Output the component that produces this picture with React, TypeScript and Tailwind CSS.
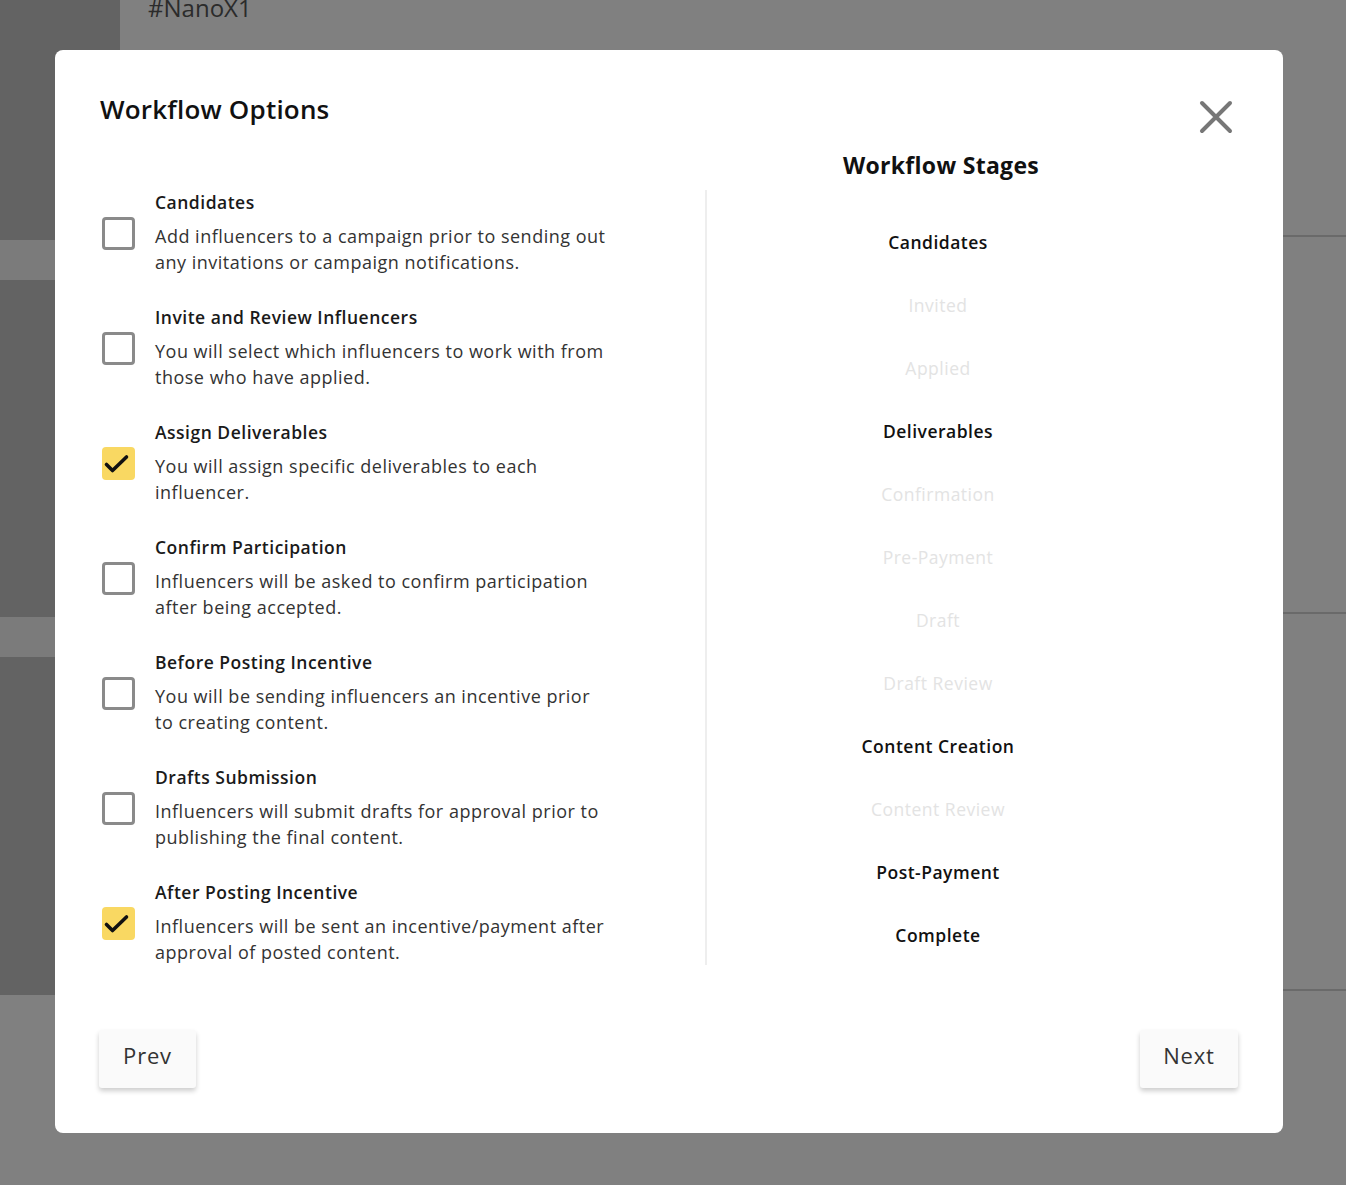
import React from 'react';

const options = [
  {
    title: 'Candidates',
    desc: ['Add influencers to a campaign prior to sending out', 'any invitations or campaign notifications.'],
    checked: false,
  },
  {
    title: 'Invite and Review Influencers',
    desc: ['You will select which influencers to work with from', 'those who have applied.'],
    checked: false,
  },
  {
    title: 'Assign Deliverables',
    desc: ['You will assign specific deliverables to each', 'influencer.'],
    checked: true,
  },
  {
    title: 'Confirm Participation',
    desc: ['Influencers will be asked to confirm participation', 'after being accepted.'],
    checked: false,
  },
  {
    title: 'Before Posting Incentive',
    desc: ['You will be sending influencers an incentive prior', 'to creating content.'],
    checked: false,
  },
  {
    title: 'Drafts Submission',
    desc: ['Influencers will submit drafts for approval prior to', 'publishing the final content.'],
    checked: false,
  },
  {
    title: 'After Posting Incentive',
    desc: ['Influencers will be sent an incentive/payment after', 'approval of posted content.'],
    checked: true,
  },
];

const stages = [
  { name: 'Candidates', active: true },
  { name: 'Invited', active: false },
  { name: 'Applied', active: false },
  { name: 'Deliverables', active: true },
  { name: 'Confirmation', active: false },
  { name: 'Pre-Payment', active: false },
  { name: 'Draft', active: false },
  { name: 'Draft Review', active: false },
  { name: 'Content Creation', active: true },
  { name: 'Content Review', active: false },
  { name: 'Post-Payment', active: true },
  { name: 'Complete', active: true },
];

function Checkbox({ checked }: { checked: boolean }) {
  if (checked) {
    return (
      <div className="h-[33px] w-[33px] rounded-[4px] bg-[#f9d862]">
        <svg width="33" height="33" viewBox="0 0 33 33" fill="none">
          <path d="M4.5 17.5l6 6L24.5 10" stroke="#111" strokeWidth="3.6" strokeLinecap="round" strokeLinejoin="round" />
        </svg>
      </div>
    );
  }
  return <div className="h-[33px] w-[33px] rounded-[4px] border-[3px] border-[#8a8a8a] bg-white" />;
}

function Background() {
  return (
    <div className="flex h-full w-full">
      <div className="flex w-[120px] flex-col">
        <div className="h-[240px] bg-[#636363]" />
        <div className="h-[40px] bg-[#7b7b7b]" />
        <div className="h-[337px] bg-[#636363]" />
        <div className="h-[40px] bg-[#7b7b7b]" />
        <div className="h-[338px] bg-[#636363]" />
        <div className="flex-1 bg-[#808080]" />
      </div>
      <div className="flex flex-1 flex-col bg-[#808080]">
        <div className="h-[235px] pl-[28px]">
          <div className="-mt-[7px] text-[24px] leading-[30px] text-[#2b2b2b]">#NanoX1</div>
        </div>
        <div className="h-[2px] bg-[#6a6a6a]" />
        <div className="h-[375px]" />
        <div className="h-[2px] bg-[#6a6a6a]" />
        <div className="h-[375px]" />
        <div className="h-[2px] bg-[#6a6a6a]" />
        <div className="flex-1" />
      </div>
    </div>
  );
}

export default function App() {
  return (
    <div
      className="relative h-[1185px] w-full overflow-hidden bg-[#808080]"
      style={{ fontFamily: '"Open Sans", "Noto Sans", sans-serif' }}
    >
      <Background />

      <div className="absolute left-[55px] top-[50px] flex h-[1083px] w-[1228px] flex-col rounded-[8px] bg-white px-[45px] pb-[45px] pt-[43px]">
        <h2 className="text-[26px] font-semibold leading-[32px] tracking-[0.2px] text-[#111]">Workflow Options</h2>

        <button className="absolute right-[50px] top-[50px] flex h-[34px] w-[34px] items-center justify-center">
          <svg width="34" height="34" viewBox="0 0 34 34" fill="none">
            <path d="M3 3l28 28M31 3L3 31" stroke="#777" strokeWidth="4" strokeLinecap="round" />
          </svg>
        </button>

        <div className="mt-[20px] flex flex-1">
          <div className="flex w-[605px] flex-col gap-[30px] pt-[45px]">
            {options.map((o) => (
              <div key={o.title} className="flex items-start">
                <div className="ml-[2px] mt-[27px] w-[53px] shrink-0">
                  <Checkbox checked={o.checked} />
                </div>
                <div>
                  <div className="text-[17.5px] font-semibold leading-[24px] tracking-[0.5px] text-[#1a1a1a]">{o.title}</div>
                  <div className="mt-[9px] text-[18px] leading-[26px] tracking-[0.5px] text-[#333]">
                    {o.desc.map((l) => (
                      <div key={l} className="whitespace-nowrap">{l}</div>
                    ))}
                  </div>
                </div>
              </div>
            ))}
          </div>

          <div className="mt-[45px] h-[775px] w-[2px] bg-[#eeeeee]" />

          <div className="flex w-[462px] flex-col items-center">
            <div className="ml-[6px] text-[23px] font-bold leading-[40px] tracking-[0.3px] text-[#111]">Workflow Stages</div>
            <div className="mt-[45px] flex flex-col items-center">
              {stages.map((s) => (
                <div
                  key={s.name}
                  className={
                    s.active
                      ? 'h-[63px] text-[17.5px] font-semibold leading-[24px] tracking-[0.5px] text-[#111]'
                      : 'h-[63px] text-[17.5px] leading-[24px] tracking-[0.5px] text-[#e3e3e3]'
                  }
                >
                  {s.name}
                </div>
              ))}
            </div>
          </div>
        </div>

        <div className="flex items-end justify-between">
          <button className="ml-[-1px] h-[58px] w-[97px] rounded-[3px] bg-[#fafafa] pb-[8px] text-[22px] tracking-[0.8px] text-[#333] shadow-[0_3px_5px_rgba(0,0,0,0.2)]">
            Prev
          </button>
          <button className="h-[58px] w-[98px] rounded-[3px] bg-[#fafafa] pb-[8px] text-[22px] tracking-[0.8px] text-[#333] shadow-[0_3px_5px_rgba(0,0,0,0.2)]">
            Next
          </button>
        </div>
      </div>
    </div>
  );
}
